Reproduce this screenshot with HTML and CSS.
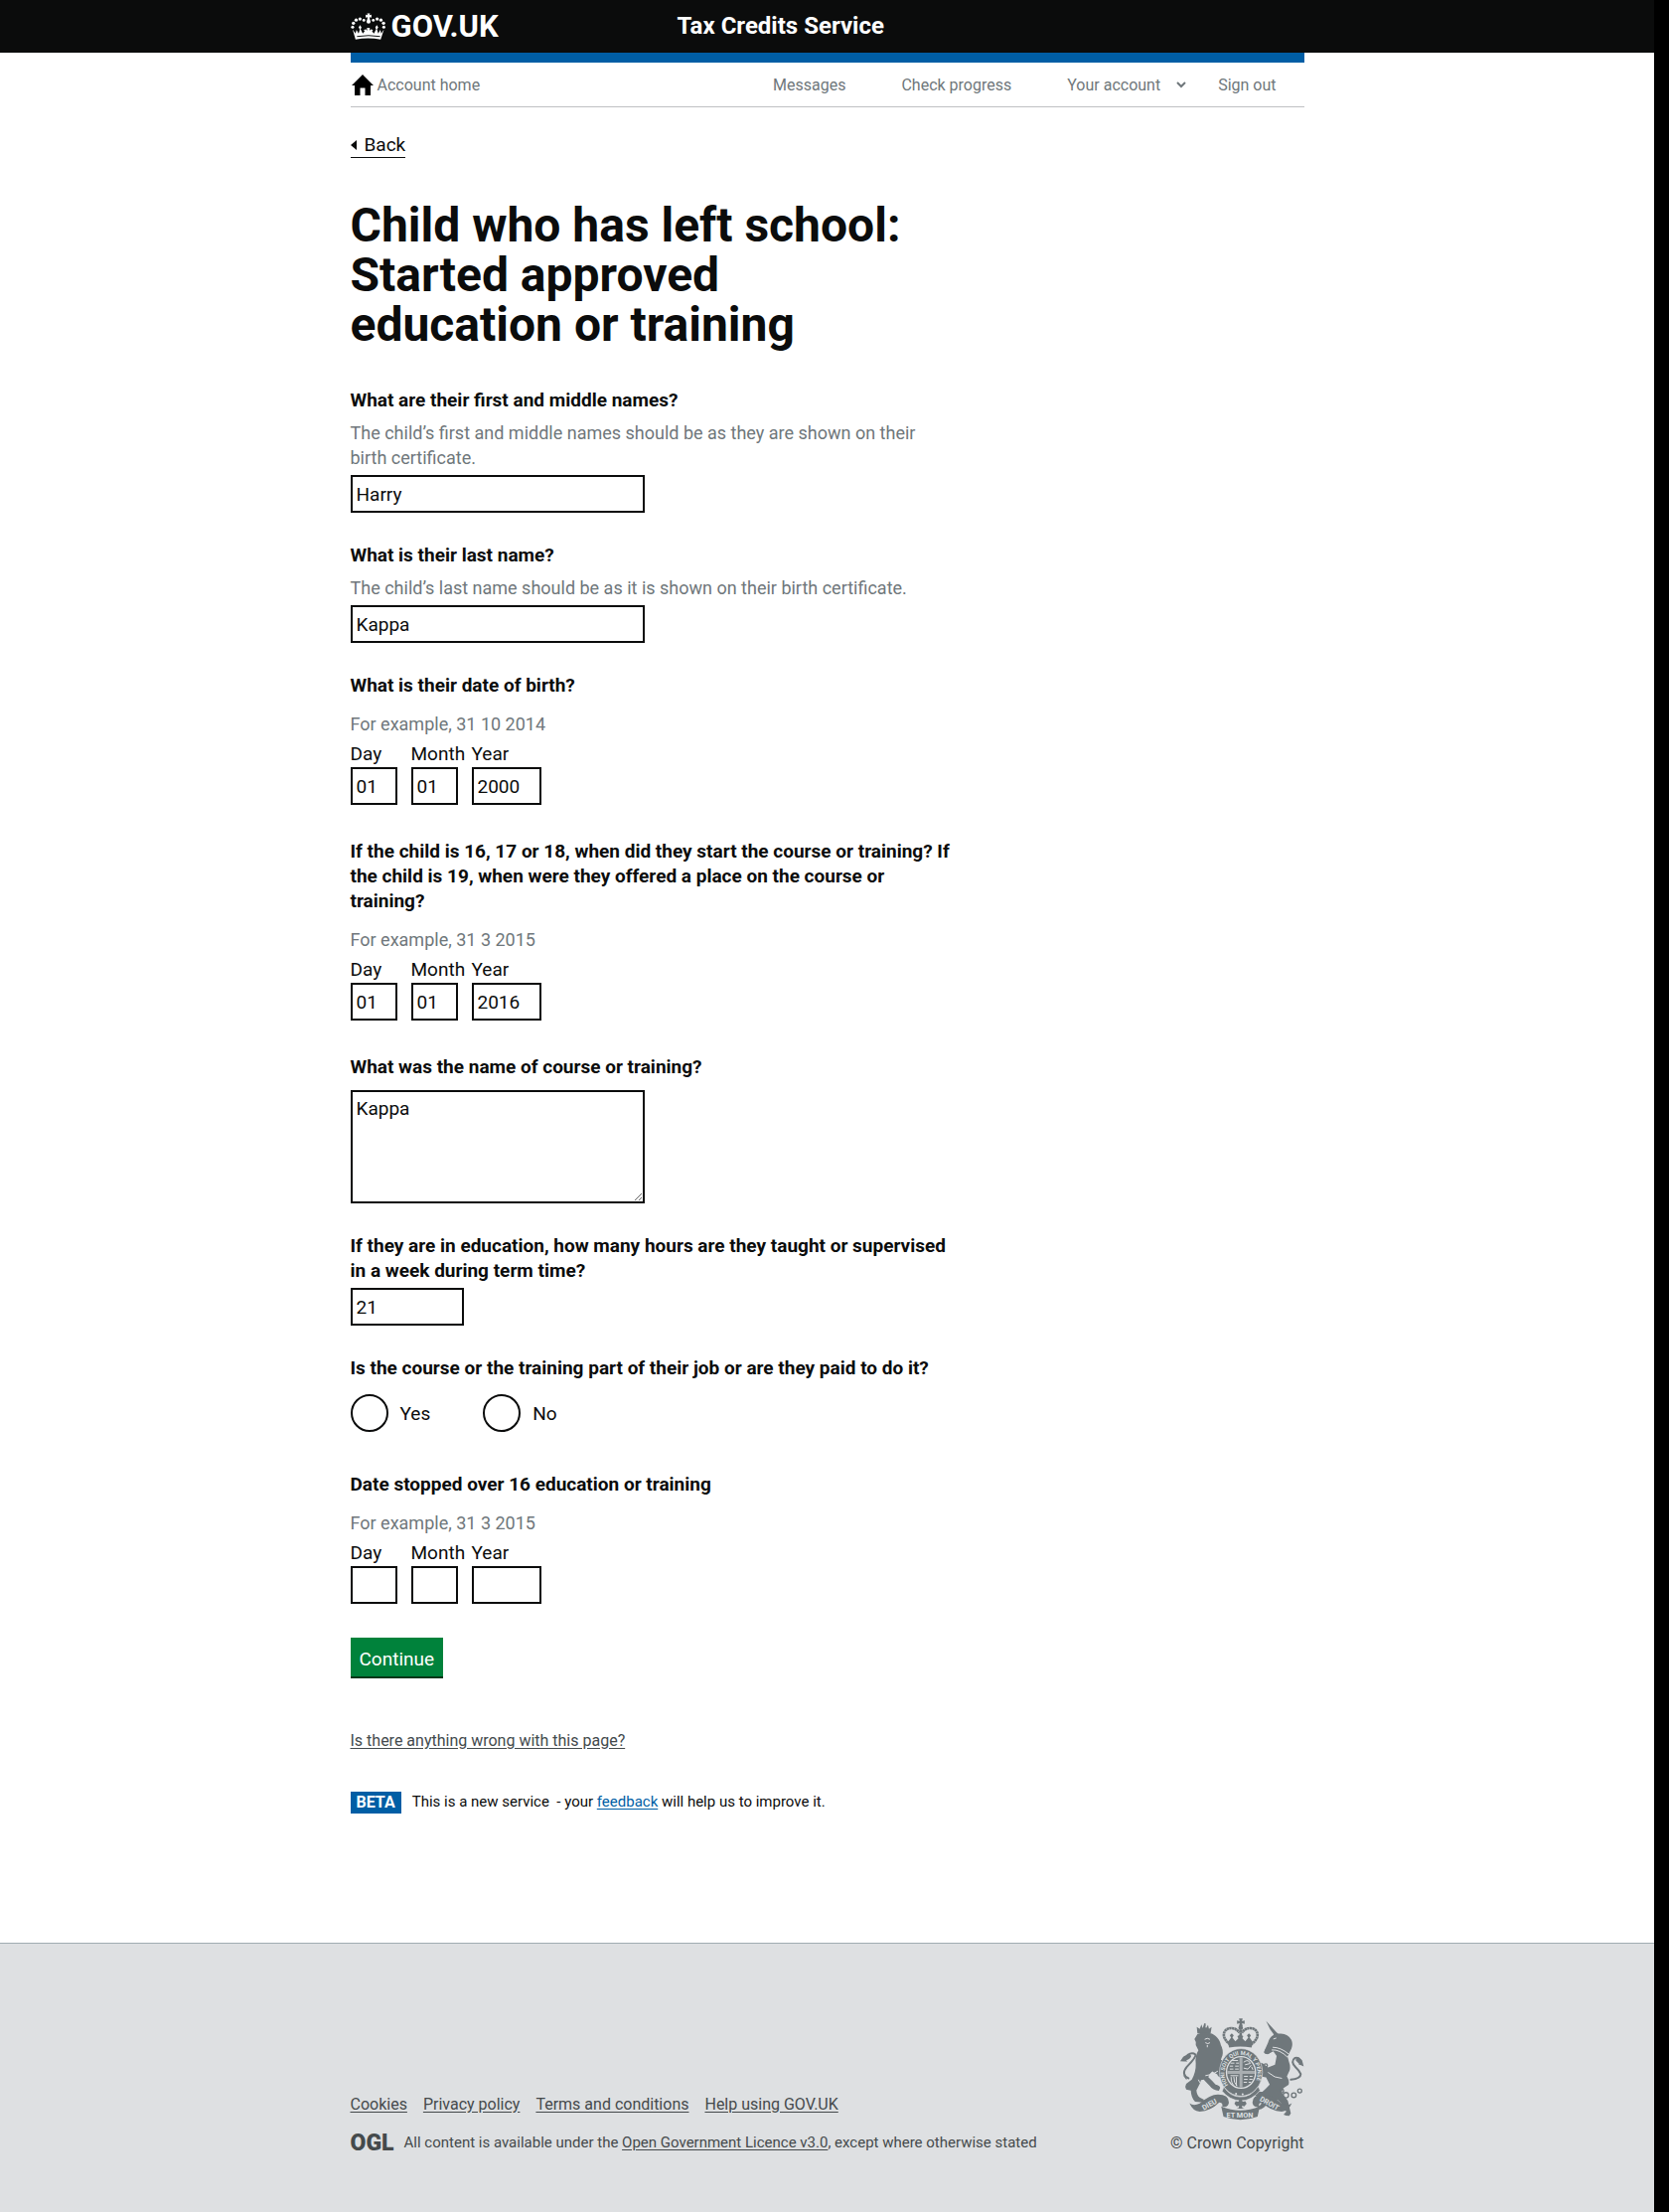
FILE: index.html
```html
<!DOCTYPE html>
<html lang="en">
<head>
<meta charset="utf-8">
<title>Tax Credits Service</title>
<link rel="stylesheet" href="styles.css">
</head>
<body>
<header class="site-header">
  <div class="container header-inner">
    <a class="brand" href="#">
      <svg class="brand-crown" viewBox="0 0 36 28" aria-hidden="true">
        <g fill="#fff">
          <path d="M17 0h3l-.6 2 2.100-.5v3l-2.100-.5.6 3h-3l.6-3-2.100.5v-3l2.100.5z"/>
          <circle cx="18.500" cy="8.500" r="2.100"/>
          <circle cx="13.600" cy="7.200" r="1.500"/><circle cx="9.600" cy="5.800" r="1.700"/><circle cx="5.600" cy="7" r="1.700"/><circle cx="2.800" cy="10.200" r="1.700"/><circle cx="2" cy="14.200" r="1.600"/>
          <circle cx="23.400" cy="7.200" r="1.500"/><circle cx="27.400" cy="5.800" r="1.700"/><circle cx="31.300" cy="7" r="1.700"/><circle cx="34" cy="10.200" r="1.700"/><circle cx="34.300" cy="14.200" r="1.600"/>
          <path d="M2 16.500l3 4.500 1-4 2.200 4 1.300-4.500-1.300-2 1.500-2.200 1.500 2.200-.9 2 2.200 4.500 2-2.500-1-1.500 2.500-.5 1.200 1.500-.4-3h3l-.4 3 1.200-1.500 2.500.5-1 1.500 2 2.500 2.200-4.500-.8-2 1.500-2.200 1.500 2.200-1.300 2 1.300 4.500 2.200-4 .9 4 2.900-4.500-3.500 10.500q-13-2.200-26 0z"/>
        </g>
        <path d="M6.500 24q12-2 24 0" fill="none" stroke="#0b0c0c" stroke-width="1"/>
      </svg>
      <span>GOV.UK</span>
    </a>
    <a class="service-name" href="#">Tax Credits Service</a>
  </div>
</header>

<div class="container">
  <nav class="account-nav" aria-label="Account">
    <a class="home-link" href="#">
      <svg class="home-icon" viewBox="0 0 22 21" aria-hidden="true"><path d="M11 0L22 11H19V21H13.500V13.500H8.500V21H3V11H0z" fill="#000"/></svg>
      Account home
    </a>
    <ul class="nav-list">
      <li><a href="#">Messages</a></li>
      <li><a href="#">Check progress</a></li>
      <li><a class="menu-link" href="#">Your account
        <svg class="chevron" viewBox="0 0 10 7" aria-hidden="true"><path d="M1 1l4 4 4-4" fill="none" stroke="#6f777b" stroke-width="2"/></svg></a></li>
      <li><a href="#">Sign out</a></li>
    </ul>
  </nav>

  <main class="main">
    <a class="back" href="#">Back</a>
    <h1>Child who has left school: Started approved education or training</h1>
    <form class="form">
      <div class="field">
        <label class="question" for="first">What are their first and middle names?</label>
        <span class="hint" id="first-hint">The child’s first and middle names should be as they are shown on their birth certificate.</span>
        <input class="text" id="first" type="text" value="Harry" aria-describedby="first-hint">
      </div>
      <div class="field">
        <label class="question" for="last">What is their last name?</label>
        <span class="hint" id="last-hint">The child’s last name should be as it is shown on their birth certificate.</span>
        <input class="text" id="last" type="text" value="Kappa" aria-describedby="last-hint">
      </div>
      <fieldset class="field date-field">
        <legend class="question">What is their date of birth?</legend>
        <span class="hint">For example, 31 10 2014</span>
        <div class="date">
          <div class="part"><label for="dob-d">Day</label><input class="text" id="dob-d" type="text" value="01"></div>
          <div class="part"><label for="dob-m">Month</label><input class="text" id="dob-m" type="text" value="01"></div>
          <div class="part year"><label for="dob-y">Year</label><input class="text" id="dob-y" type="text" value="2000"></div>
        </div>
      </fieldset>
      <fieldset class="field date-field">
        <legend class="question">If the child is 16, 17 or 18, when did they start the course or training? If the child is 19, when were they offered a place on the course or training?</legend>
        <span class="hint">For example, 31 3 2015</span>
        <div class="date">
          <div class="part"><label for="start-d">Day</label><input class="text" id="start-d" type="text" value="01"></div>
          <div class="part"><label for="start-m">Month</label><input class="text" id="start-m" type="text" value="01"></div>
          <div class="part year"><label for="start-y">Year</label><input class="text" id="start-y" type="text" value="2016"></div>
        </div>
      </fieldset>
      <div class="field course-field">
        <label class="question" for="course">What was the name of course or training?</label>
        <textarea class="text" id="course">Kappa</textarea>
      </div>
      <div class="field hours-field">
        <label class="question" for="hours">If they are in education, how many hours are they taught or supervised in a week during term time?</label>
        <input class="text" id="hours" type="text" value="21">
      </div>
      <fieldset class="field radio-field">
        <legend class="question">Is the course or the training part of their job or are they paid to do it?</legend>
        <div class="radios">
          <label class="choice"><input type="radio" name="paid">Yes</label>
          <label class="choice"><input type="radio" name="paid">No</label>
        </div>
      </fieldset>
      <fieldset class="field date-field">
        <legend class="question">Date stopped over 16 education or training</legend>
        <span class="hint">For example, 31 3 2015</span>
        <div class="date">
          <div class="part"><label for="stop-d">Day</label><input class="text" id="stop-d" type="text"></div>
          <div class="part"><label for="stop-m">Month</label><input class="text" id="stop-m" type="text"></div>
          <div class="part year"><label for="stop-y">Year</label><input class="text" id="stop-y" type="text"></div>
        </div>
      </fieldset>
      <button class="continue" type="submit">Continue</button>
    </form>
    <a class="report" href="#">Is there anything wrong with this page?</a>
    <p class="phase"><strong class="tag">BETA</strong><span>This is a new service &nbsp;- your <a href="#">feedback</a> will help us to improve it.</span></p>
  </main>
</div>

<footer class="site-footer">
  <div class="container footer-inner">
    <div>
      <ul class="footer-links">
        <li><a href="#">Cookies</a></li>
        <li><a href="#">Privacy policy</a></li>
        <li><a href="#">Terms and conditions</a></li>
        <li><a href="#">Help using GOV.UK</a></li>
      </ul>
      <p class="licence"><span class="ogl">OGL</span><span>All content is available under the <a href="#">Open Government Licence v3.0</a>, except where otherwise stated</span></p>
    </div>
    <a class="copyright" href="#">
      <svg class="crest" viewBox="84 62 376 310" aria-hidden="true">
        <g fill="#6f777b">
          <path d="M262 63h11l-2 8 8-2v10l-8-2 2 9h-11l2-9-8 2v-10l8 2z"/>
          <circle cx="267" cy="91" r="7"/>
          <g fill="none" stroke="#6f777b" stroke-width="8" stroke-dasharray="7 1">
            <path d="M236 141C208 124 210 94 238 92q16 0 25 14"/>
            <path d="M298 141C326 124 324 94 296 92q-16 0-25 14"/>
            <path d="M267 98V128"/>
          </g>
          <path d="M228 134l10-13-4-7 6-6 6 6-4 7 9 11 9-9-3-7 9-4 9 4-3 7 9 9 9-11-4-7 6-6 6 6-4 7 10 13-4 17q-34-7-68 0z"/>
          <path d="M136 108l-2-20 9 6 5-13 4 11 5-15 5 15 6-10 3 12 8-6-3 20zM156 78h5v8h-5z"/>
          <path d="M136 110q20-8 44-1c18 9 25 23 27 34q8 14 5 31l-5 14 22 11-5 9-19 8q8 6 11 16l-3 13q-14-4-17-13l-15-9q-9 7-12 17 10 9 22 23 12 2 14 10l-4 9q-18-1-28-15l-18-19-8 1-4 12-10 19q1 15 10 22l13 7-3 8-24-2q-12-12-13-34l-14-3q-5-9 0-17l17-13q13-24 12-50-3-21 8-39l-8-16q3-8-4-18z"/>
          <path d="M344 70l38 42-10 6q-18-22-28-48z"/>
          <path d="M350 136q4-17 16-23l5-9 10 5q28-4 40 19 5 12 0 26l-12 24 4 15q6 16 2 28l-8 17q9 14 5 26l-16 10-5 13 19 25 9 38-5 8q-10 0-17-4l8-9q-9-22-25-35l-21-5-11-6q4 8 0 16-6 22-29 24l-2-8 11-7q4-13 1-25l-25-4q-8-4-6-11l35 1q11-10 22-22l-11-22-20-3-8-12-10 4-8-8 11-11 8 2-8-12 9-7 15 4 17 13 21-8 5-27-10-14-17 9q-10 0-12-6z"/>
        </g>
        <g fill="none" stroke="#6f777b" stroke-width="6" stroke-linecap="round">
          <path d="M109 244q-24-12-5-35 29-30 26-37-10-8-23 1"/>
          <path d="M419 248q30-4 30-17-4-10-15-20-18-18-2-29 10-3 16 7"/>
          <g stroke-width="4"><circle cx="391" cy="282" r="6"/><circle cx="404" cy="295" r="8"/><circle cx="428" cy="295" r="7"/><circle cx="446" cy="282" r="6"/><circle cx="348" cy="162" r="6"/><circle cx="343" cy="205" r="5"/></g>
        </g>
        <path fill="#6f777b" d="M84 192l9-13 12-7q12-6 12 6-5 10-15 11l4 4q-11 0-22-1zM458 208l-5-19-11-9q-8 0-8 10l11 11-4 1q9 2 17 6zM92 234l12 7-1 8z"/>
        <g fill="none" stroke="#dee0e2" stroke-width="3">
          <path d="M158 126l8-3 8 3M160 136q8 6 14 0M166 143v7M366 125l9-3M361 158q24-2 48 22M364 150q24 0 48 20"/>
          <path d="M160 236q24-2 38-14M139 248q6 17 22 20M350 226q20 18 42 18"/>
        </g>
        <ellipse cx="268" cy="226" rx="65" ry="72" fill="#6f777b" stroke="#dee0e2" stroke-width="2"/>
        <ellipse cx="268" cy="226" rx="46" ry="50" fill="#dee0e2"/>
        <ellipse cx="268" cy="226" rx="42" ry="46" fill="#6f777b"/>
        <path d="M268 180v92M226 226h84" stroke="#a9aeb1" stroke-width="9"/>
        <g stroke="#dee0e2" stroke-width="3" fill="none">
          <path d="M236 198h12m5 0h9M234 207h10m6 0h11M234 216h11m5 0h11M241 190h18M276 195q15-11 20 4l-16 4m19 1-10 12-13-3m24-4 4 9M277 238h12m5 0h9M277 247h11m5 0h10M276 256h10m5 0h7M236 236h24M238 240q0 20 10 27M246 239q0 20 10 28M254 239v28"/>
        </g>
        <path id="garter" d="M229 264A50 56 0 1 1 307 264" fill="none"/>
        <text class="garter-text"><textPath href="#garter">HONI SOIT QUI MAL Y PENSE</textPath></text>
        <path d="M216 270q20 30 49 30 32 2 55-31l6 12q-27 32-60 31-33-2-55-29z" fill="#6f777b" stroke="#dee0e2" stroke-width="2"/>
        <g fill="#dee0e2"><circle cx="253" cy="291" r="3"/><circle cx="273" cy="292" r="3"/></g>
        <path d="M112 319q12 10 31 1 33-28 56-27 34 1 32 26-4 15-20 10 3-12-9-12-26 26-59 28-21-2-31-26zM422 319q-12 10-31 1-33-28-56-27-34 1-32 26 4 15 20 10-3-12 9-12 26 26 59 28 21-2 31-26z" fill="#6f777b"/>
        <path d="M208 329q58 24 117 0l-7 31q-52 20-103 0zM264 306h5l4 9 8-2 4 8-7 8-7-2 1 7 7 2h-25l7-2 1-7-7 2-7-8 4-8 8 2z" fill="#6f777b"/>
        <g class="motto">
          <text x="224" y="363">ET MON</text>
          <text transform="translate(155 341) rotate(-29)">DIEU</text>
          <text transform="translate(323 311) rotate(29)">DROIT</text>
        </g>
      </svg>
      <span>© Crown Copyright</span>
    </a>
  </div>
</footer>
</body>
</html>
```
FILE: styles.css
```css
* { box-sizing: border-box; }

body {
  margin: 0;
  border-right: 15px solid #000;
  background: #fff;
  color: #0b0c0c;
  font: 19px/25px Roboto, "Liberation Sans", sans-serif;
}

.container { max-width: 960px; margin: 0 auto; }

.site-header { background: #0b0c0c; }
.header-inner { display: flex; align-items: center; height: 53px; }
.brand {
  display: flex;
  align-items: center;
  gap: 6px;
  flex: 0 0 329px;
  color: #fff;
  font-size: 31px;
  font-weight: 700;
  text-decoration: none;
}
.brand-crown { width: 35px; height: 28px; }
.service-name { color: #fff; font-size: 24px; font-weight: 700; text-decoration: none; }

.account-nav {
  display: flex;
  justify-content: space-between;
  align-items: center;
  height: 55px;
  padding-right: 28px;
  border-top: 10px solid #005ea5;
  border-bottom: 1px solid #bfc1c3;
  font-size: 16px;
}
.account-nav a { color: #6f777b; text-decoration: none; }
.home-link { display: flex; align-items: center; gap: 4px; }
.home-icon { width: 22px; height: 21px; margin-left: 1px; }
.nav-list { display: flex; gap: 56px; margin: 0; padding: 0; list-style: none; }
.nav-list li:last-child { margin-left: -24px; }
.menu-link { display: flex; align-items: center; gap: 16px; }
.chevron { width: 10px; height: 7px; }

.main { width: 606px; max-width: 100%; padding: 25px 0 129px; }
.back {
  display: flex;
  align-items: center;
  gap: 8px;
  width: fit-content;
  border-bottom: 1px solid #0b0c0c;
  color: #0b0c0c;
  text-decoration: none;
}
.back::before {
  content: "";
  border: 5px solid transparent;
  border-right: 6px solid #0b0c0c;
  border-left: 0;
}
h1 { max-width: 560px; margin: 43px 0 38px; font-size: 48px; line-height: 50px; font-weight: 700; }

.field { display: block; min-width: 0; margin: 0 0 30px; padding: 0; border: 0; }
.question { display: block; padding: 0; margin-bottom: 8px; font-weight: 700; }
.hint { display: block; margin-bottom: 5px; color: #6f777b; font-size: 18px; }
.text {
  display: block;
  width: 296px;
  height: 38px;
  margin: 0;
  padding: 4px;
  border: 2px solid #0b0c0c;
  border-radius: 0;
  background: #fff;
  color: #0b0c0c;
  font: inherit;
}
.date-field { margin-bottom: 34px; }
.date-field .question { margin-bottom: 14px; }
.date { display: flex; gap: 14px; }
.part { width: 47px; }
.part label { display: block; margin-bottom: 1px; }
.part .text { width: 100%; }
.year { width: 70px; }
.course-field .question { margin-bottom: 11px; }
textarea.text { height: 114px; }
.hours-field .question { margin-bottom: 5px; }
.hours-field .text { width: 114px; }
.radio-field { margin-bottom: 40px; }
.radio-field .question { margin-bottom: 14px; }
.radios { display: flex; gap: 53px; }
.choice { display: flex; align-items: center; gap: 12px; }
.choice input {
  appearance: none;
  width: 38px;
  height: 38px;
  margin: 0;
  border: 2px solid #0b0c0c;
  border-radius: 50%;
}
.continue {
  display: block;
  height: 39px;
  padding: 4px 9px 0;
  border: 0;
  background: #00823b;
  box-shadow: 0 2px 0 #003618;
  color: #fff;
  font: inherit;
}
.report { display: block; width: fit-content; margin-top: 52px; color: #434a4d; font-size: 16px; text-underline-offset: 2px; }
.phase { display: flex; align-items: center; gap: 11px; margin: 37px 0 0; font-size: 15px; }
.phase a { color: #005ea5; text-underline-offset: 2px; }
.tag { padding: 0 6px; background: #005ea5; color: #fff; font-size: 16px; line-height: 22px; }

.site-footer { border-top: 1px solid #a1acb2; background: #dee0e2; color: #454a4c; font-size: 16px; }
.site-footer a { color: #454a4c; text-underline-offset: 2px; }
.footer-inner { display: flex; justify-content: space-between; align-items: flex-end; padding: 75px 0 57px; }
.footer-links { display: flex; gap: 16px; margin: 0 0 14px; padding: 0; list-style: none; }
.licence { display: flex; align-items: center; gap: 10px; margin: 0; font-size: 15px; }
.ogl { font-size: 23px; font-weight: 900; }
.site-footer .copyright { display: flex; flex-direction: column; align-items: flex-end; gap: 10px; text-decoration: none; }
.crest { width: 125px; height: 103px; }
.garter-text { fill: #dee0e2; font-size: 17px; font-weight: 700; }
.motto { fill: #dee0e2; font-size: 22px; font-weight: 700; }
```
